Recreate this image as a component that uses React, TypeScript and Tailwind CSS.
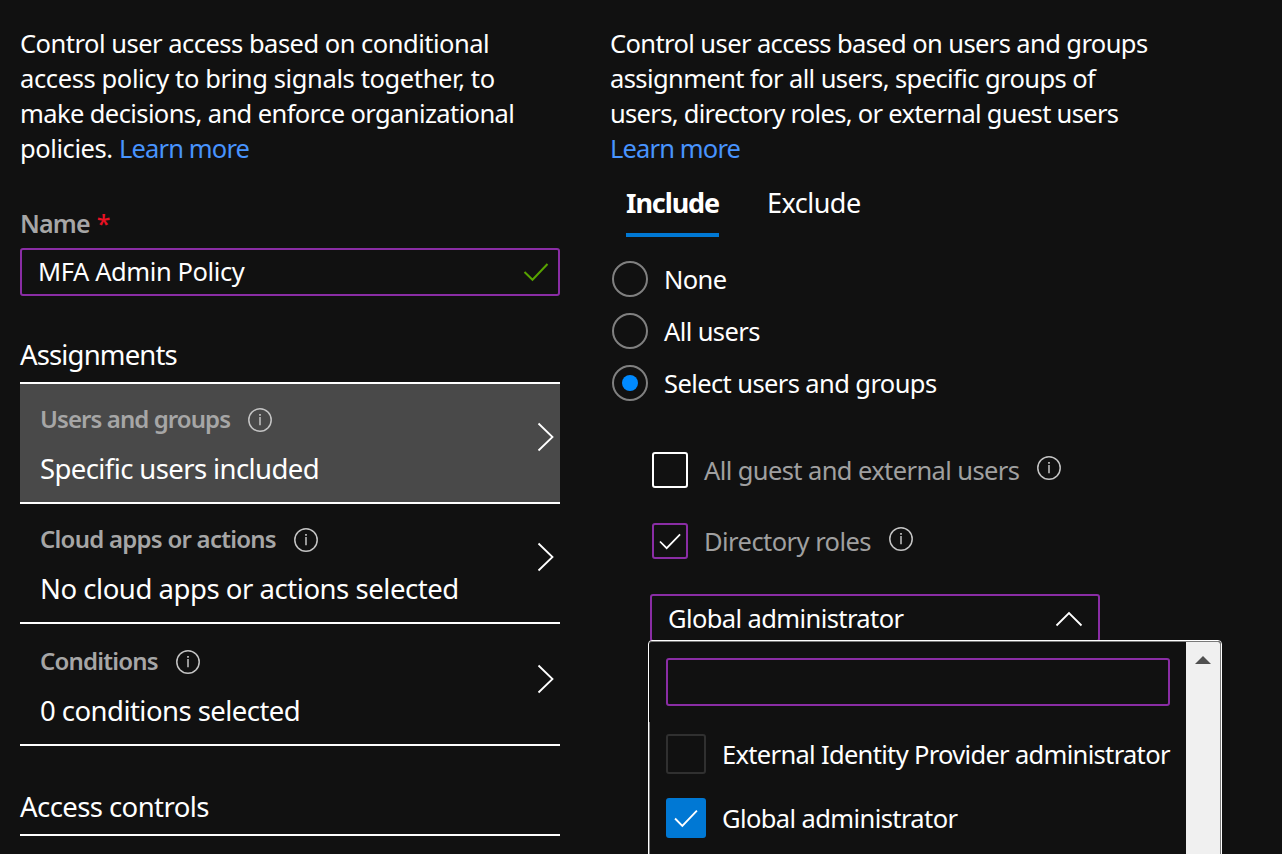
import type { ReactNode } from "react";

function InfoIcon() {
  return (
    <svg width="24" height="24" viewBox="0 0 24 24" className="shrink-0" fill="none" stroke="#c4c4c4">
      <circle cx="12" cy="12" r="11.2" strokeWidth="1.5" />
      <path d="M12 9V17.3" strokeWidth="1.5" />
      <path d="M12 6V7.7" strokeWidth="1.7" />
    </svg>
  );
}

function AssignmentRow({ label, value, rowClass, labelClass, valueClass }: { label: string; value: string; rowClass: string; labelClass: string; valueClass: string }) {
  return (
    <div className={`flex justify-between border-b-2 border-white pl-5 pr-1.5 ${rowClass}`}>
      <div className="flex flex-col">
        <div className="flex h-[34px] items-center gap-[18px]">
          <span className={`mb-[2px] whitespace-nowrap text-[24px] leading-[34px] font-semibold text-[#a6a6a6] ${labelClass}`}>{label}</span>
          <InfoIcon />
        </div>
        <span className={`mt-[13px] whitespace-nowrap text-[27.5px] leading-[38px] ${valueClass}`}>{value}</span>
      </div>
      <svg width="17" height="30" viewBox="0 0 17 30" className="mt-[19px] shrink-0" fill="none" stroke="#fff" strokeWidth="1.8">
        <path d="M1.5 1.5L15.5 15L1.5 28.5" />
      </svg>
    </div>
  );
}

function Radio({ children, selected, textClass }: { children: ReactNode; selected?: boolean; textClass: string }) {
  return (
    <div className="flex h-9 items-center gap-4">
      <span className="flex size-9 shrink-0 items-center justify-center rounded-full border-2 border-[#808080]">
        {selected && <span className="size-4 rounded-full bg-[#008aff]" />}
      </span>
      <span className={`whitespace-nowrap text-[25.5px] leading-9 ${textClass}`}>{children}</span>
    </div>
  );
}

function Check({ size }: { size: number }) {
  return (
    <svg width={size} height={size} viewBox="0 0 24 24" fill="none" stroke="#fff" strokeWidth="1.8">
      <path d="M1 12L8 19L22 4.5" />
    </svg>
  );
}

export default function App() {
  return (
    <div className="flex h-[854px] w-[1282px] overflow-hidden bg-[#111111] pl-5 font-['Noto_Sans',sans-serif] text-white">
      <section className="flex w-[540px] shrink-0 flex-col pt-[26px]">
        <p className="whitespace-nowrap text-[25.5px] leading-[35px]">
          <span className="block tracking-[-0.5px]">Control user access based on conditional</span>
          <span className="block tracking-[-0.38px]">access policy to bring signals together, to</span>
          <span className="block tracking-[-0.6px]">make decisions, and enforce organizational</span>
          <span className="block tracking-[-0.42px]">policies. <a className="tracking-[-0.85px] text-[#4894fe]">Learn more</a></span>
        </p>
        <div className="mt-[40px] flex h-[34px] gap-2 text-[25px] leading-[34px] font-semibold">
          <span className="tracking-[-0.85px] text-[#a6a6a6]">Name</span>
          <span className="-ml-px font-medium text-[#e81123]">*</span>
        </div>
        <div className="mt-[8px] flex h-12 items-center justify-between rounded-[3px] border-2 border-[#8a2da5] pr-[9px] pl-4">
          <span className="pb-[2px] text-[25.5px] leading-[35px] tracking-[-0.4px]">MFA Admin Policy</span>
          <svg width="26" height="20" viewBox="0 0 26 20" fill="none" stroke="#57a300" strokeWidth="2">
            <path d="M1.5 10L9.5 17.8L24.5 2" />
          </svg>
        </div>
        <h2 className="mt-[40px] h-[46px] text-[27.5px] leading-[38px] tracking-[-0.85px]">Assignments</h2>
        <div className="border-t-2 border-white">
          <AssignmentRow label="Users and groups" value="Specific users included" rowClass="h-[120px] bg-[#494949] pt-[19px]" labelClass="tracking-[-0.92px]" valueClass="tracking-[-0.6px]" />
          <AssignmentRow label="Cloud apps or actions" value="No cloud apps or actions selected" rowClass="h-[120px] pt-[19px]" labelClass="tracking-[-0.75px]" valueClass="tracking-[-0.46px]" />
          <AssignmentRow label="Conditions" value="0 conditions selected" rowClass="h-[122px] pt-[21px]" labelClass="tracking-[-0.8px]" valueClass="tracking-[-0.54px]" />
        </div>
        <h2 className="mt-[42px] h-[48px] border-b-2 border-white text-[27.5px] leading-[38px] tracking-[-0.57px]">Access controls</h2>
      </section>

      <section className="ml-[50px] flex w-[620px] shrink-0 flex-col pt-[26px]">
        <p className="whitespace-nowrap text-[25.5px] leading-[35px]">
          <span className="block tracking-[-0.6px]">Control user access based on users and groups</span>
          <span className="block tracking-[-0.6px]">assignment for all users, specific groups of</span>
          <span className="block tracking-[-0.69px]">users, directory roles, or external guest users</span>
          <a className="block tracking-[-0.85px] text-[#4894fe]">Learn more</a>
        </p>
        <div className="mt-[18px] ml-4 flex h-[53px] gap-12 text-[27px] leading-[38px]">
          <span className="w-[93px] border-b-4 border-[#0078d4] font-bold tracking-[-1.1px]">Include</span>
          <span className="tracking-[-0.5px]">Exclude</span>
        </div>
        <div className="mt-6 ml-0.5 flex flex-col gap-4">
          <Radio textClass="tracking-[-0.6px]">None</Radio>
          <Radio textClass="tracking-[-0.6px]">All users</Radio>
          <Radio selected textClass="tracking-[-0.6px]">Select users and groups</Radio>
        </div>
        <div className="mt-[51px] ml-[42px] flex h-9 items-center">
          <span className="size-9 rounded-[3px] border-2 border-white" />
          <span className="ml-4 text-[25.5px] leading-9 tracking-[-0.6px] text-[#a0a0a0]">All guest and external users</span>
          <span className="mb-[4px] ml-[18px]"><InfoIcon /></span>
        </div>
        <div className="mt-[35px] ml-[42px] flex h-9 items-center">
          <span className="flex size-9 items-center justify-center rounded-[3px] border-2 border-[#8a2da5]"><Check size={23} /></span>
          <span className="ml-4 text-[25.5px] leading-9 tracking-[-0.55px] text-[#a0a0a0]">Directory roles</span>
          <span className="mb-[4px] ml-[18px]"><InfoIcon /></span>
        </div>
        <div className="relative mt-[35px] ml-10 flex h-12 w-[450px] items-center justify-between rounded-[3px] border-2 border-[#8a2da5] pr-[15px] pl-4">
          <span className="text-[25.5px] leading-[35px] tracking-[-0.6px]">Global administrator</span>
          <svg width="28" height="16" viewBox="0 0 28 16" className="mt-[2px]" fill="none" stroke="#fff" strokeWidth="1.8">
            <path d="M1.5 14.5L14 2L26.5 14.5" />
          </svg>
          <div className="absolute top-[44px] -left-1 flex h-[240px] w-[574px] rounded-[4px] border border-white bg-[#111111]">
            <div className="flex w-full overflow-hidden rounded-[3px] border border-l-0 border-[#7a7a7a]">
              <div className="mt-20 w-px shrink-0 bg-[#7a7a7a]" />
              <div className="flex w-[536px] shrink-0 flex-col pt-4 pl-4">
                <div className="h-12 w-[504px] rounded-[3px] border-2 border-[#8a2da5]" />
                <div className="mt-7 flex h-10 items-center gap-4">
                  <span className="size-10 shrink-0 rounded-[3px] border-2 border-[#303030]" />
                  <span className="text-[25.5px] leading-9 tracking-[-0.68px] whitespace-nowrap">External Identity Provider administrator</span>
                </div>
                <div className="mt-6 flex h-10 items-center gap-4">
                  <span className="flex size-10 shrink-0 items-center justify-center rounded-[3px] bg-[#0078d4]"><Check size={25} /></span>
                  <span className="text-[25.5px] leading-9 tracking-[-0.6px] whitespace-nowrap">Global administrator</span>
                </div>
              </div>
              <div className="flex grow justify-center bg-[#f0f0f0] pt-3.5">
                <svg width="16" height="8" viewBox="0 0 16 8" fill="#505050"><path d="M8 0L16 8H0Z" /></svg>
              </div>
            </div>
          </div>
        </div>
      </section>
    </div>
  );
}
